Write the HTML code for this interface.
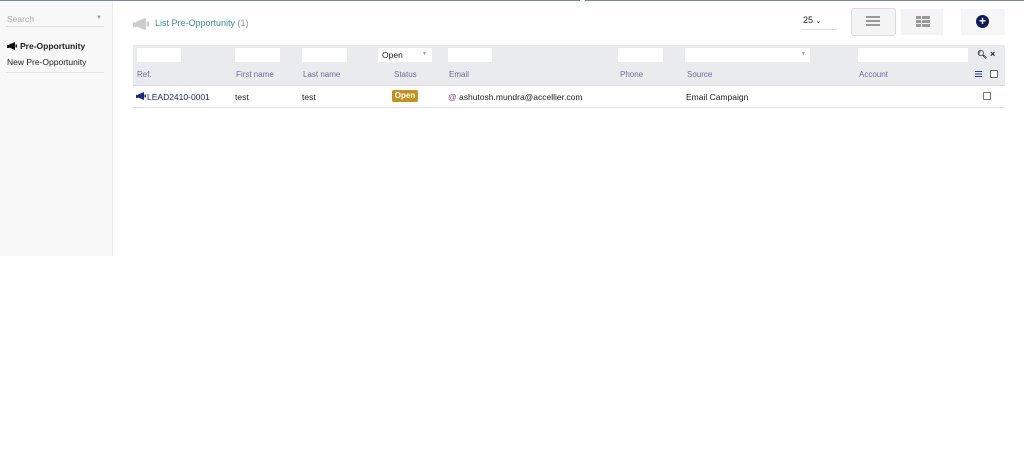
<!DOCTYPE html>
<html><head><style>
body{margin:0;width:1024px;height:466px;background:#fff;font-family:"Liberation Sans",sans-serif;font-size:8.5px;color:#222;position:relative;overflow:hidden}
.a{position:absolute}
.in{position:absolute;background:#fff;height:14px}
.h{position:absolute;top:70px;color:#6a6e9a;font-size:8px}
.r{position:absolute;top:92px;font-size:8.5px;color:#222}
</style></head><body>
<div class="a" style="left:0;top:0;width:580px;height:1px;background:#7a85a0"></div>
<div class="a" style="left:585px;top:0;width:439px;height:1px;background:#7a85a0"></div>
<div class="a" style="left:0;top:1px;width:112px;height:255px;background:#f8f8f8;border-right:1px solid #eee"></div>
<div class="a" style="left:7px;top:14px;color:#aaa;font-size:8.5px">Search</div>
<div class="a" style="left:96px;top:15px;color:#999;font-size:6px">▼</div>
<div class="a" style="left:6px;top:26px;width:98px;height:1px;background:#ddd"></div>
<svg class="a" style="left:7px;top:42px" width="10" height="8" viewBox="0 0 10 8"><path d="M0 3h2v3H0zM2 2.5L8 0v8L2 5.5zM8.5 2.5h1.5v3H8.5z" fill="#111"/></svg>
<div class="a" style="left:20px;top:41px;font-weight:bold;font-size:8.5px">Pre-Opportunity</div>
<div class="a" style="left:7px;top:57px;font-size:8.5px">New Pre-Opportunity</div>
<div class="a" style="left:6px;top:72px;width:98px;height:1px;background:#e4e4e4"></div>

<svg class="a" style="left:133px;top:17px" width="16" height="14" viewBox="0 0 10 8"><path d="M0 3h2v3H0zM2 2.5L8 0v8L2 5.5zM8.5 2.5h1.5v3H8.5z" fill="#ccc"/></svg>
<div class="a" style="left:155px;top:18px;color:#3c8ea0;font-size:9px">List Pre-Opportunity <span style="color:#999">(1)</span></div>

<div class="a" style="left:803px;top:15px;font-size:9px">25 <span style="font-size:7px">⌄</span></div>
<div class="a" style="left:801px;top:29px;width:36px;height:1px;background:#ddd"></div>
<div class="a" style="left:851px;top:8px;width:43px;height:26px;border:1px solid #ddd;border-radius:3px;background:#f4f4f4"></div>
<div class="a" style="left:866px;top:16px;width:14px;height:2px;background:#999;box-shadow:0 4px #999,0 8px #999"></div>
<div class="a" style="left:901px;top:9px;width:42px;height:26px;background:#f4f4f4"></div>
<div class="a" style="left:916px;top:16px;width:14px;height:11px;background:repeating-linear-gradient(#999 0 3px,#f4f4f4 3px 4px)"></div>
<div class="a" style="left:921px;top:16px;width:1px;height:11px;background:#f4f4f4"></div>
<div class="a" style="left:961px;top:9px;width:44px;height:26px;background:#f6f6f6"></div>
<div class="a" style="left:976px;top:15px;width:13px;height:13px;border-radius:50%;background:#0a1a5a;color:#fff;font-size:12px;font-weight:bold;line-height:13px;text-align:center">+</div>

<div class="a" style="left:133px;top:45px;width:872px;height:40px;background:#eaebef;border-bottom:1px solid #ddd"></div>
<div class="in" style="left:137px;top:48px;width:44px"></div>
<div class="in" style="left:235px;top:48px;width:45px"></div>
<div class="in" style="left:302px;top:48px;width:45px"></div>
<div class="in" style="left:378px;top:48px;width:54px"><span style="position:absolute;left:4px;top:2px;font-size:8.5px">Open</span><span style="position:absolute;right:5px;top:3px;font-size:5px;color:#999">▼</span></div>
<div class="in" style="left:448px;top:48px;width:44px"></div>
<div class="in" style="left:618px;top:48px;width:45px"></div>
<div class="in" style="left:685px;top:48px;width:125px"><span style="position:absolute;right:4px;top:3px;font-size:5px;color:#999">▼</span></div>
<div class="in" style="left:858px;top:48px;width:110px"></div>
<div class="a" style="left:977px;top:50px;font-size:8px;font-weight:bold;color:#223">&#x1F50D;&#xFE0E;</div>
<div class="a" style="left:990px;top:49px;font-size:9px;font-weight:bold;color:#222">×</div>
<div class="h" style="left:137px">Ref.</div>
<div class="h" style="left:236px">First name</div>
<div class="h" style="left:303px">Last name</div>
<div class="h" style="left:394px">Status</div>
<div class="h" style="left:449px">Email</div>
<div class="h" style="left:620px">Phone</div>
<div class="h" style="left:687px">Source</div>
<div class="h" style="left:859px">Account</div>
<div class="a" style="left:975px;top:71px;width:7px;height:1px;background:#2a3b8f;box-shadow:0 2.5px #2a3b8f,0 5px #2a3b8f"></div>
<div class="a" style="left:990px;top:70px;width:6px;height:6px;border:1px solid #666;border-radius:1px;background:#fff"></div>

<svg class="a" style="left:136px;top:92px" width="10" height="8" viewBox="0 0 10 8"><path d="M0 3h2v3H0zM2 2.5L8 0v8L2 5.5zM8.5 2.5h1.5v3H8.5z" fill="#1a2a7a"/></svg>
<div class="r" style="left:147px;color:#1a2a6a">LEAD2410-0001</div>
<div class="r" style="left:235px">test</div>
<div class="r" style="left:302px">test</div>
<div class="a" style="left:392px;top:90px;width:26px;height:12px;background:#c29220;border-radius:2px;color:#fff;font-weight:bold;font-size:8px;line-height:12px;text-align:center">Open</div>
<div class="r" style="left:448px"><span style="color:#7a3a8a">@</span> ashutosh.mundra@accellier.com</div>
<div class="r" style="left:686px">Email Campaign</div>
<div class="a" style="left:983px;top:92px;width:6px;height:6px;border:1px solid #777;border-radius:1px"></div>
<div class="a" style="left:133px;top:107px;width:872px;height:1px;background:#e2e2e2"></div>
</body></html>
